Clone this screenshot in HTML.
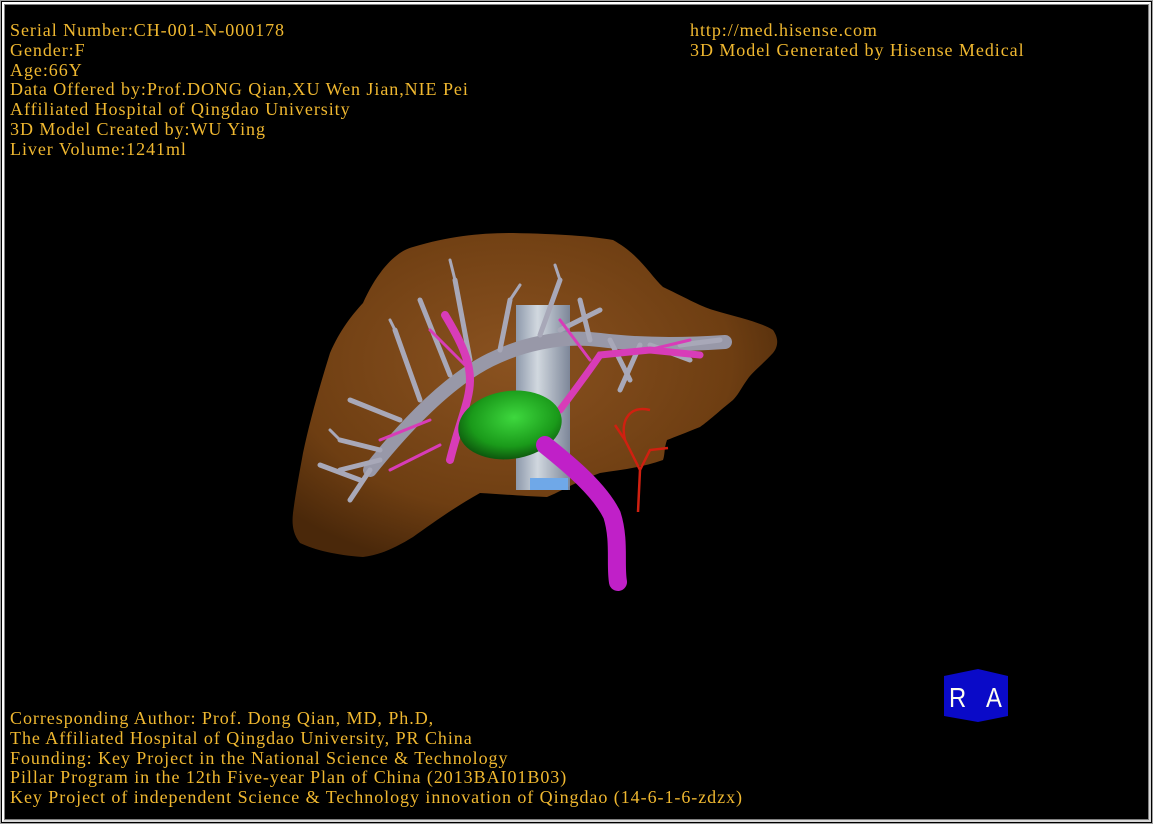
<!DOCTYPE html>
<html><head><meta charset="utf-8"><style>
html,body{margin:0;padding:0;background:#000;}
body{width:1153px;height:824px;overflow:hidden;position:relative;}
.frame{position:absolute;left:0;top:0;width:1153px;height:824px;box-sizing:border-box;border:1px solid #a0a0a0;}
.f2{position:absolute;left:1px;top:1px;right:1px;bottom:1px;border:2px solid #fff;border-right-color:#d8d8d8;border-bottom-color:#d8d8d8;}
.f3{position:absolute;left:3px;top:3px;right:3px;bottom:3px;border:1px solid #808080;background:#000;}
svg{position:absolute;left:0;top:0;}
.t{position:absolute;font-family:"Liberation Serif",serif;font-size:18px;letter-spacing:0.95px;line-height:19.8px;color:#f0b830;white-space:pre;}
.ra{position:absolute;font-family:"Liberation Sans",sans-serif;font-size:28px;color:#fffff0;line-height:28px;}
</style></head><body>
<div class="frame"><div class="f2"></div><div class="f3"></div></div>
<svg width="1153" height="824" viewBox="0 0 1153 824">
<defs>
<radialGradient id="lv" cx="0.45" cy="0.4" r="0.65">
<stop offset="0" stop-color="#8a5220"/><stop offset="0.7" stop-color="#6e3e12"/><stop offset="1" stop-color="#4a280a"/>
</radialGradient>
<linearGradient id="cyl" x1="0" x2="1">
<stop offset="0" stop-color="#8fa0b8"/><stop offset="0.4" stop-color="#d8e4f0"/><stop offset="1" stop-color="#7d8ca4"/>
</linearGradient>
<radialGradient id="gr" cx="0.55" cy="0.4" r="0.6">
<stop offset="0" stop-color="#3ed83e"/><stop offset="0.7" stop-color="#1a9a1a"/><stop offset="1" stop-color="#0e5a0e"/>
</radialGradient>
</defs>
<path d="M363,303 C380,265 400,250 413,247 C450,236 480,233 513,233 C560,234 590,236 613,240 C640,255 650,275 663,287 C690,300 700,306 713,310 C740,318 760,322 773,330 C780,340 777,348 773,353 C762,365 752,372 747,380 C740,390 738,395 733,400 C718,412 710,420 700,427 C685,433 675,437 667,440 C664,448 665,455 663,460 C640,468 620,470 600,473 C575,482 560,492 547,497 C520,496 500,494 480,493 C450,510 430,525 413,537 C395,548 380,555 363,557 C335,555 315,550 300,543 C292,533 292,522 293,513 C296,490 300,470 303,453 C310,420 320,385 330,353 C340,330 352,315 363,303 Z" fill="url(#lv)"/>
<rect x="516" y="305" width="54" height="185" fill="url(#cyl)" opacity="0.92"/>
<rect x="530" y="478" width="38" height="12" fill="#6fa8e8"/>
<g stroke="#a8a8b8" fill="none" stroke-linecap="round">
<path d="M370,470 C410,420 450,380 490,360 C520,345 560,335 600,340 C640,345 680,345 725,342" stroke-width="14" stroke="#9898a8"/>
<path d="M360,480 L320,465 M380,450 L340,440 M400,420 L350,400 M420,400 L395,330 M450,375 L420,300 M470,360 L455,280 M500,350 L510,300 M540,335 L560,280 M560,330 L600,310 M610,340 L630,380 M640,345 L620,390 M680,345 L720,340 M650,345 L690,360 M370,470 L350,500 M380,460 L340,470 M590,340 L580,300" stroke-width="5"/>
<path d="M455,280 L450,260 M560,280 L555,265 M510,300 L520,285 M395,330 L390,320 M340,440 L330,430" stroke-width="3"/>
</g>
<g stroke="#d83cb8" fill="none" stroke-linecap="round">
<path d="M450,460 C460,420 470,400 470,380 C470,360 460,340 445,315" stroke-width="8"/>
<path d="M560,410 C575,390 590,370 600,355 L650,350 L700,355" stroke-width="7"/>
<path d="M430,420 L380,440 M440,445 L390,470 M470,370 L430,330 M590,360 L560,320 M640,352 L690,340" stroke-width="3"/>
</g>
<ellipse cx="510" cy="425" rx="52" ry="34" fill="url(#gr)" transform="rotate(-8 510 425)"/>
<path d="M545,445 C570,465 600,490 612,515 C620,540 615,565 618,582" stroke="#c020c8" stroke-width="18" fill="none" stroke-linecap="round"/>
<g stroke="#d02010" fill="none" stroke-width="2.5">
<path d="M640,470 L625,440 L615,425 M640,470 L650,450 L668,448 M640,470 L638,512"/>
<path d="M625,440 C620,420 630,405 650,410"/>
</g>
<polygon points="944,676 978,669 1008,676 1008,716 978,722 944,716" fill="#0a0ac8"/>
</svg>
<div class="ra" style="left:949px;top:684px;transform:scaleX(0.85);transform-origin:left">R</div>
<div class="ra" style="left:986px;top:684px;transform:scaleX(0.85);transform-origin:left">A</div>
<div class="t" style="left:10px;top:21px">Serial Number:CH-001-N-000178
Gender:F
Age:66Y
Data Offered by:Prof.DONG Qian,XU Wen Jian,NIE Pei
Affiliated Hospital of Qingdao University
3D Model Created by:WU Ying
Liver Volume:1241ml</div>
<div class="t" style="left:690px;top:21px">http://med.hisense.com
3D Model Generated by Hisense Medical</div>
<div class="t" style="left:10px;top:709px">Corresponding Author: Prof. Dong Qian, MD, Ph.D,
The Affiliated Hospital of Qingdao University, PR China
Founding: Key Project in the National Science &amp; Technology
Pillar Program in the 12th Five-year Plan of China (2013BAI01B03)
Key Project of independent Science &amp; Technology innovation of Qingdao (14-6-1-6-zdzx)</div>
</body></html>
